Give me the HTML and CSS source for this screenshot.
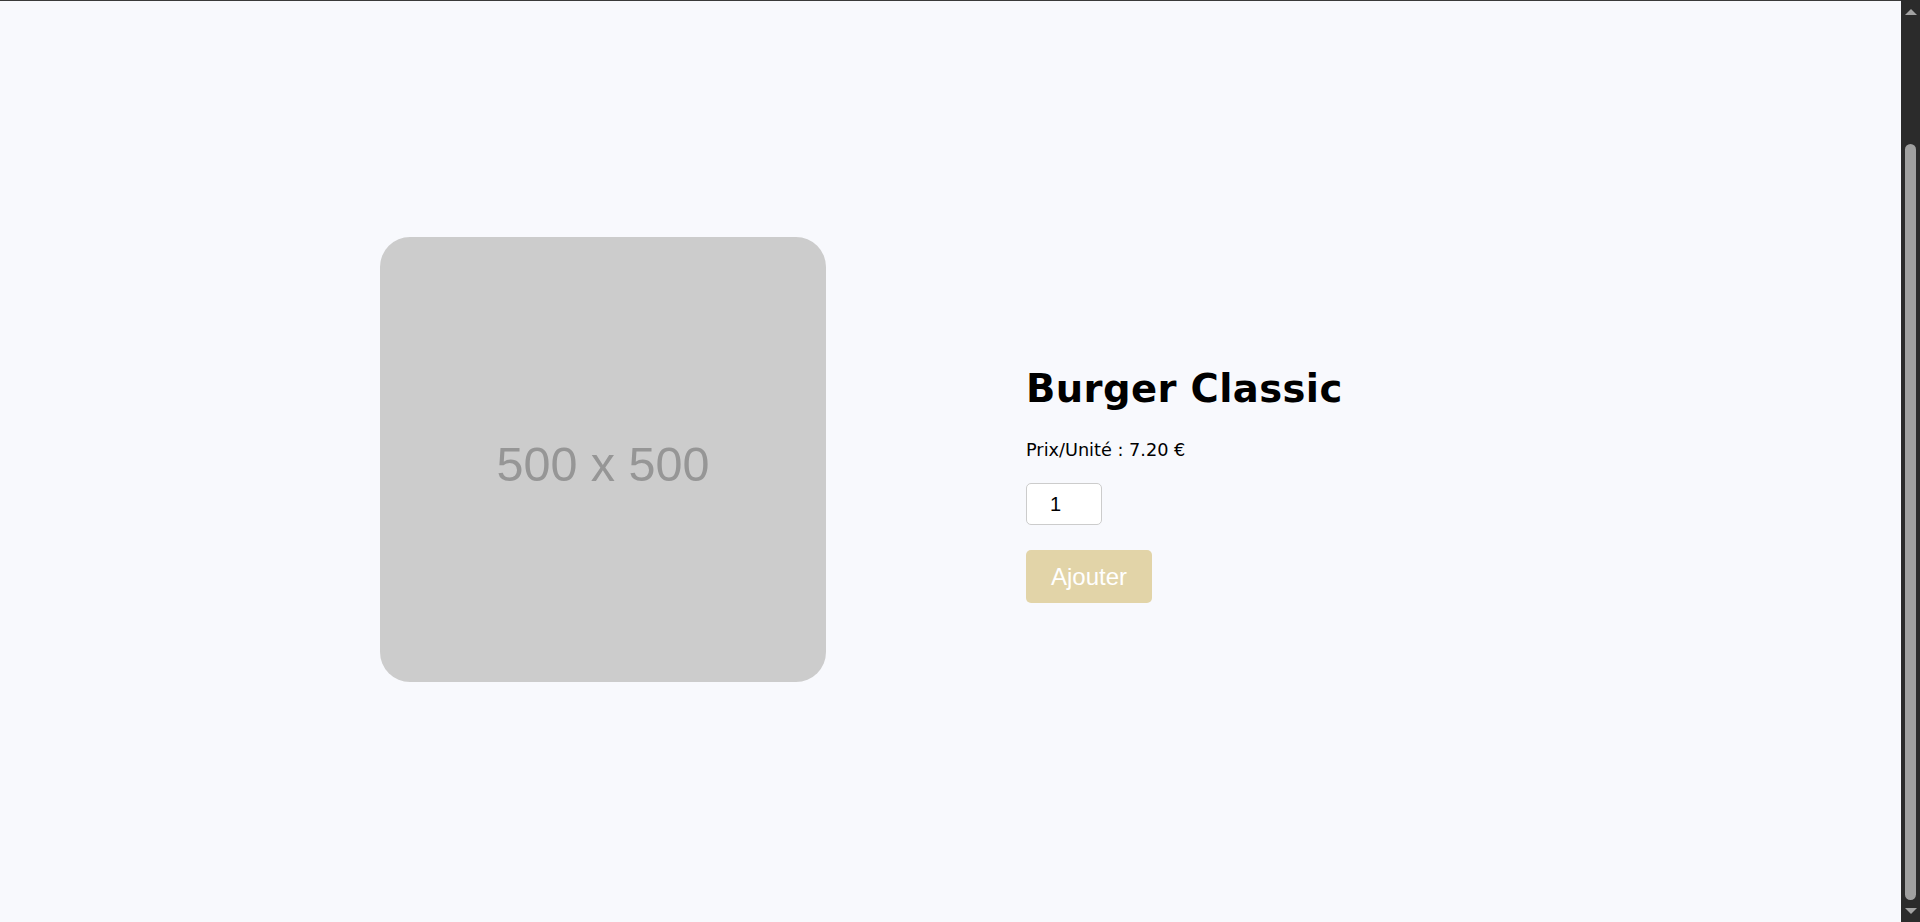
FILE: index.html
```html
<!DOCTYPE html>
<html lang="fr">
<head>
<meta charset="utf-8">
<title>Burger Classic</title>
<link rel="stylesheet" href="styles.css">
</head>
<body>
<main class="product">
  <div class="product-image">
    <span class="placeholder-text">500 x 500</span>
  </div>
  <div class="product-info">
    <h1 class="product-title">Burger Classic</h1>
    <p class="product-price">Prix/Unité : 7.20 €</p>
    <form class="product-form">
      <input class="qty" type="number" value="1" min="1">
      <button class="add-btn" type="button">Ajouter</button>
    </form>
  </div>
</main>
<div class="spacer"></div>
<div class="scrollbar" aria-hidden="true">
  <span class="sb-arrow sb-up"></span>
  <span class="sb-track"><span class="sb-thumb"></span></span>
  <span class="sb-arrow sb-down"></span>
</div>
</body>
</html>
```

FILE: styles.css
```css
html {
  background: #f8f9fd;
}
body {
  margin: 0;
  padding-right: 19px;
  background: #f8f9fd;
  color: #000;
  font-family: "DejaVu Sans", "Liberation Sans", sans-serif;
  border-top: 1px solid #3a3a3a;
}
.product {
  width: 1141px;
  margin: 0 auto;
  padding-top: 236px;
  display: flex;
  align-items: flex-start;
  gap: 200px;
}
.product-image {
  width: 446px;
  height: 445px;
  flex: none;
  box-sizing: border-box;
  padding-top: 9px;
  border-radius: 30px;
  background: #cccccc;
  display: flex;
  align-items: center;
  justify-content: center;
}
.placeholder-text {
  font-family: "Liberation Sans", Arial, sans-serif;
  font-size: 48.5px;
  color: #969696;
}
.product-info {
  display: flex;
  flex-direction: column;
  align-items: flex-start;
  padding-top: 129px;
}
.product-title {
  margin: 0 0 28px;
  font-size: 38.5px;
  font-weight: 700;
  line-height: 1.2;
  letter-spacing: 0.4px;
}
.product-price {
  margin: 0 0 22px;
  font-size: 17.7px;
  line-height: 1.2;
}
.product-form {
  display: flex;
  flex-direction: column;
  align-items: flex-start;
  gap: 25px;
}
.qty {
  box-sizing: border-box;
  width: 76px;
  height: 42px;
  padding: 0 0 0 23px;
  border: 1px solid #cccccc;
  border-radius: 5px;
  background: #ffffff;
  color: #000;
  font-family: "Liberation Sans", Arial, sans-serif;
  font-size: 20px;
}
.add-btn {
  box-sizing: border-box;
  height: 53px;
  padding: 0 25px;
  border: none;
  border-radius: 5px;
  background: #e2d4a8;
  color: #ffffff;
  font-family: "Liberation Sans", Arial, sans-serif;
  font-size: 24px;
}
.spacer {
  height: 160px;
}
.scrollbar {
  position: fixed;
  top: 0;
  right: 0;
  width: 19px;
  height: 100vh;
  background: #2b2b2b;
  display: flex;
  flex-direction: column;
  align-items: center;
}
.sb-arrow {
  width: 0;
  height: 0;
  border-left: 6px solid transparent;
  border-right: 6px solid transparent;
}
.sb-up {
  margin-top: 9px;
  border-bottom: 6px solid #a3a3a3;
}
.sb-down {
  margin-bottom: 8px;
  border-top: 6px solid #a3a3a3;
}
.sb-track {
  flex: 1;
  width: 11px;
  display: flex;
  flex-direction: column;
  padding: 129px 0 8px;
}
.sb-thumb {
  flex: 1;
  border-radius: 6px;
  background: #a0a0a0;
}
```
